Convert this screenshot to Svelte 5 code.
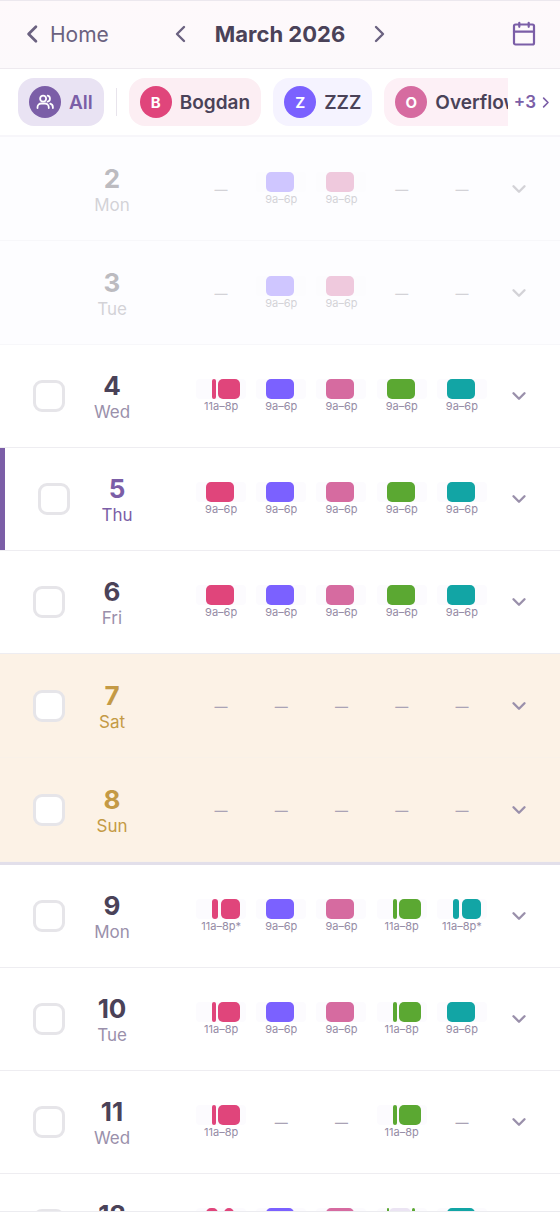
<script>
  const people = [
    { name: 'Bogdan', initial: 'B', tone: 'rose' },
    { name: 'ZZZ', initial: 'Z', tone: 'violet' },
    { name: 'Overflow', initial: 'O', tone: 'pink' }
  ];
  const tones = ['rose', 'violet', 'pink', 'green', 'teal'];

  // Each shift holds its label and its segments as [gap before, width, pale?], in percent of the track.
  const day = { label: '9a–6p', segments: [[20, 56]] };
  const late = { label: '11a–8p', segments: [[32, 8], [4, 44]] };
  const lateNote = { label: '11a–8p*', segments: [[32, 12], [6, 38]] };
  const split = { label: '9a–6p', segments: [[20, 24], [12, 20]] };
  const swap = { label: '9a–6p', segments: [[20, 4], [0, 44, true], [2, 6]] };

  const days = [
    { date: 2, name: 'Mon', kind: 'past', shifts: [null, day, day, null, null] },
    { date: 3, name: 'Tue', kind: 'past', shifts: [null, day, day, null, null] },
    { date: 4, name: 'Wed', kind: '', shifts: [late, day, day, day, day] },
    { date: 5, name: 'Thu', kind: 'today', shifts: [day, day, day, day, day] },
    { date: 6, name: 'Fri', kind: '', shifts: [day, day, day, day, day] },
    { date: 7, name: 'Sat', kind: 'weekend', shifts: [null, null, null, null, null] },
    { date: 8, name: 'Sun', kind: 'weekend', shifts: [null, null, null, null, null] },
    { date: 9, name: 'Mon', kind: 'week-start', shifts: [lateNote, day, day, late, lateNote] },
    { date: 10, name: 'Tue', kind: '', shifts: [late, day, day, late, day] },
    { date: 11, name: 'Wed', kind: '', shifts: [late, null, null, late, null] },
    { date: 12, name: 'Thu', kind: '', shifts: [split, day, day, swap, day] }
  ];
</script>

{#snippet chevron(points, size, width)}
  <svg width={size} height={size} viewBox="0 0 24 24" fill="none" stroke="currentColor" stroke-width={width} stroke-linecap="round" stroke-linejoin="round" aria-hidden="true">
    <polyline {points} />
  </svg>
{/snippet}

<div class="app">
  <header>
    <a class="home" href="#home">{@render chevron('13 4 5 12 13 20', 22, 3)}<span>Home</span></a>
    <div class="month">
      <button aria-label="Previous month">{@render chevron('15 5 8 12 15 19', 24, 2.4)}</button>
      <h1>March 2026</h1>
      <button aria-label="Next month">{@render chevron('9 5 16 12 9 19', 24, 2.4)}</button>
    </div>
    <button class="calendar" aria-label="Open calendar">
      <svg width="24" height="26" viewBox="0 0 24 26" fill="none" stroke="currentColor" stroke-width="2.2" stroke-linecap="round" stroke-linejoin="round" aria-hidden="true">
        <rect x="2" y="3.500" width="20" height="20" rx="1.500" />
        <path d="M2 10.700h20M7.300 1.800v4M16.700 1.800v4" />
      </svg>
    </button>
  </header>

  <nav class="filters" aria-label="People">
    <div class="chips">
      <button class="chip all">
        <span class="avatar">
          <svg width="18" height="18" viewBox="0 0 24 24" fill="none" stroke="currentColor" stroke-width="2.400" stroke-linecap="round" stroke-linejoin="round" aria-hidden="true">
            <circle cx="9.500" cy="7.500" r="4" />
            <path d="M2 20v-1a5 5 0 0 1 5-5h5a5 5 0 0 1 5 5v1M15.500 3.600a4 4 0 0 1 0 7.800M19 14.300a5 5 0 0 1 3.500 4.700v1" />
          </svg>
        </span>
        All
      </button>
      <span class="divider"></span>
      {#each people as person}
        <button class="chip {person.tone}">
          <span class="avatar">{person.initial}</span>
          {person.name}
        </button>
      {/each}
    </div>
    <button class="more">+3 {@render chevron('9 5 16 12 9 19', 15, 2.6)}</button>
  </nav>

  <main>
    {#each days as item}
      <section class="row {item.kind}">
        <div class="lead">
          {#if item.kind === 'past'}
            <span class="box-space"></span>
          {:else}
            <input type="checkbox" aria-label="Select March {item.date}" />
          {/if}
          <div class="date">
            <strong>{item.date}</strong>
            <span>{item.name}</span>
          </div>
        </div>
        <div class="shifts">
          {#each item.shifts as shift, i}
            {#if shift}
              <div class="shift {tones[i]}">
                <div class="track">
                  {#each shift.segments as [gap, width, pale]}
                    <span class="segment" class:pale style="margin-left: {gap}%; width: {width}%"></span>
                  {/each}
                </div>
                <span class="hours">{shift.label}</span>
              </div>
            {:else}
              <div class="shift off">—</div>
            {/if}
          {/each}
        </div>
        <button class="expand" aria-label="Show March {item.date}">{@render chevron('6 9 12 15 18 9', 22, 2.6)}</button>
      </section>
    {/each}
  </main>
</div>

<style>
  :global(body) {
    margin: 0;
    background: #fff;
  }

  .app {
    box-sizing: border-box;
    height: 100vh;
    display: flex;
    flex-direction: column;
    overflow: hidden;
    border-top: 1px solid #ece8ee;
    border-bottom: 1px solid #ececf0;
    color: #4a4258;
    font-family: Inter, 'Liberation Sans', sans-serif;
  }

  svg {
    display: block;
    flex: none;
  }

  button {
    padding: 0;
    border: 0;
    background: none;
    color: inherit;
    font: inherit;
    cursor: pointer;
  }

  header {
    box-sizing: border-box;
    flex: none;
    display: grid;
    grid-template-columns: 1fr auto 1fr;
    align-items: center;
    height: 68px;
    padding: 0 24px 1px;
    border-bottom: 1px solid #eeeaef;
    background: linear-gradient(#fef9fb, #fcf9fb);
  }

  .home {
    display: flex;
    align-items: center;
    gap: 4px;
    color: #6b6280;
    font-size: 21px;
    text-decoration: none;
  }

  .month {
    display: flex;
    align-items: center;
    gap: 22px;
  }

  .month button {
    color: #6b6280;
  }

  h1 {
    margin: 0;
    font-size: 22px;
    font-weight: 700;
  }

  .calendar {
    justify-self: end;
    color: #7b5ea7;
  }

  .filters {
    box-sizing: border-box;
    flex: none;
    display: flex;
    height: 68px;
    padding: 0 7px 0 18px;
    align-items: center;
    border-bottom: 2px solid #f7f6fa;
  }

  .chips {
    flex: 1;
    min-width: 0;
    display: flex;
    align-items: center;
    gap: 12px;
    overflow: hidden;
  }

  .chip {
    flex: none;
    display: flex;
    align-items: center;
    gap: 8px;
    height: 48px;
    padding: 0 11px;
    border-radius: 16px;
    font-size: 19px;
    font-weight: 600;
  }

  .avatar {
    display: grid;
    place-items: center;
    width: 32px;
    height: 32px;
    border-radius: 50%;
    background: var(--tone);
    color: #fff;
    font-size: 15px;
    font-weight: 700;
  }

  .chip.all {
    --tone: #7b5ea7;
    background: #e9e3f3;
    color: #7b5ea7;
  }

  .divider {
    flex: none;
    width: 1px;
    height: 28px;
    background: #e8e4ec;
  }

  .rose {
    --tone: #e0457b;
  }

  .violet {
    --tone: #7b61ff;
  }

  .pink {
    --tone: #d66ba0;
  }

  .green {
    --tone: #5ba832;
  }

  .teal {
    --tone: #12a5a5;
  }

  .chip.rose {
    background: #fceef3;
  }

  .chip.violet {
    background: #f5f3ff;
  }

  .chip.pink {
    background: #fdf0f6;
  }

  .more {
    display: flex;
    align-items: center;
    gap: 2px;
    padding-left: 6px;
    color: #7b5ea7;
    font-size: 17px;
    font-weight: 600;
  }

  .row {
    box-sizing: border-box;
    flex: none;
    display: flex;
    height: 103px;
    padding-right: 14px;
    border-bottom: 1px solid #eeedf1;
  }

  .row.past,
  .row.weekend {
    height: 104px;
  }

  .row.past {
    background: #fdfdff;
    border-bottom-color: #f7f7fa;
  }

  .past .lead,
  .past .shifts,
  .past .expand {
    opacity: 0.35;
  }

  .row.weekend {
    background: #fcf2e6;
    border-bottom-color: #f9f1e8;
  }

  .row.week-start {
    height: 106px;
    border-top: 3px solid #e2dfea;
  }

  .lead {
    box-sizing: border-box;
    flex: none;
    display: flex;
    align-items: center;
    gap: 8px;
    width: 191px;
    padding-left: 33px;
  }

  .today .lead {
    border-left: 5px solid #7b5ea7;
  }

  input,
  .box-space {
    box-sizing: border-box;
    flex: none;
    width: 32px;
    height: 32px;
    margin: 0;
  }

  input {
    appearance: none;
    border: 3px solid #e6e5e9;
    border-radius: 9px;
    background: #fff;
  }

  .date {
    display: flex;
    flex-direction: column;
    align-items: center;
    gap: 1px;
    width: 78px;
    padding-top: 3px;
  }

  .date strong {
    font-size: 26px;
    line-height: 28px;
    font-weight: 700;
  }

  .date span {
    color: #9a90ab;
    font-size: 17px;
    line-height: 22px;
  }

  .past .date strong {
    color: #45434c;
  }

  .past .date span,
  .past .hours,
  .past .off,
  .past .expand {
    color: #87858e;
  }

  .today .date strong,
  .today .date span {
    color: #7b5ea7;
  }

  .weekend .date strong,
  .weekend .date span {
    color: #c49a45;
  }

  .shifts {
    flex: 1;
    display: grid;
    grid-template-columns: repeat(5, 1fr);
    align-items: center;
  }

  .shift {
    display: flex;
    flex-direction: column;
    align-items: center;
  }

  .track {
    display: flex;
    width: 50px;
    height: 20px;
    border-radius: 4px;
    background: #fcfbfe;
  }

  .segment {
    flex: none;
    border-radius: 5px;
    background: var(--tone);
  }

  .segment.pale {
    background: #ebe4f3;
  }

  .hours {
    color: #958ba5;
    font-size: 11px;
    line-height: 14px;
  }

  .off {
    color: #aaa3b5;
    font-size: 13px;
    font-weight: 600;
  }

  .expand {
    display: grid;
    place-items: center;
    width: 54px;
    color: #9a90ab;
  }
</style>
